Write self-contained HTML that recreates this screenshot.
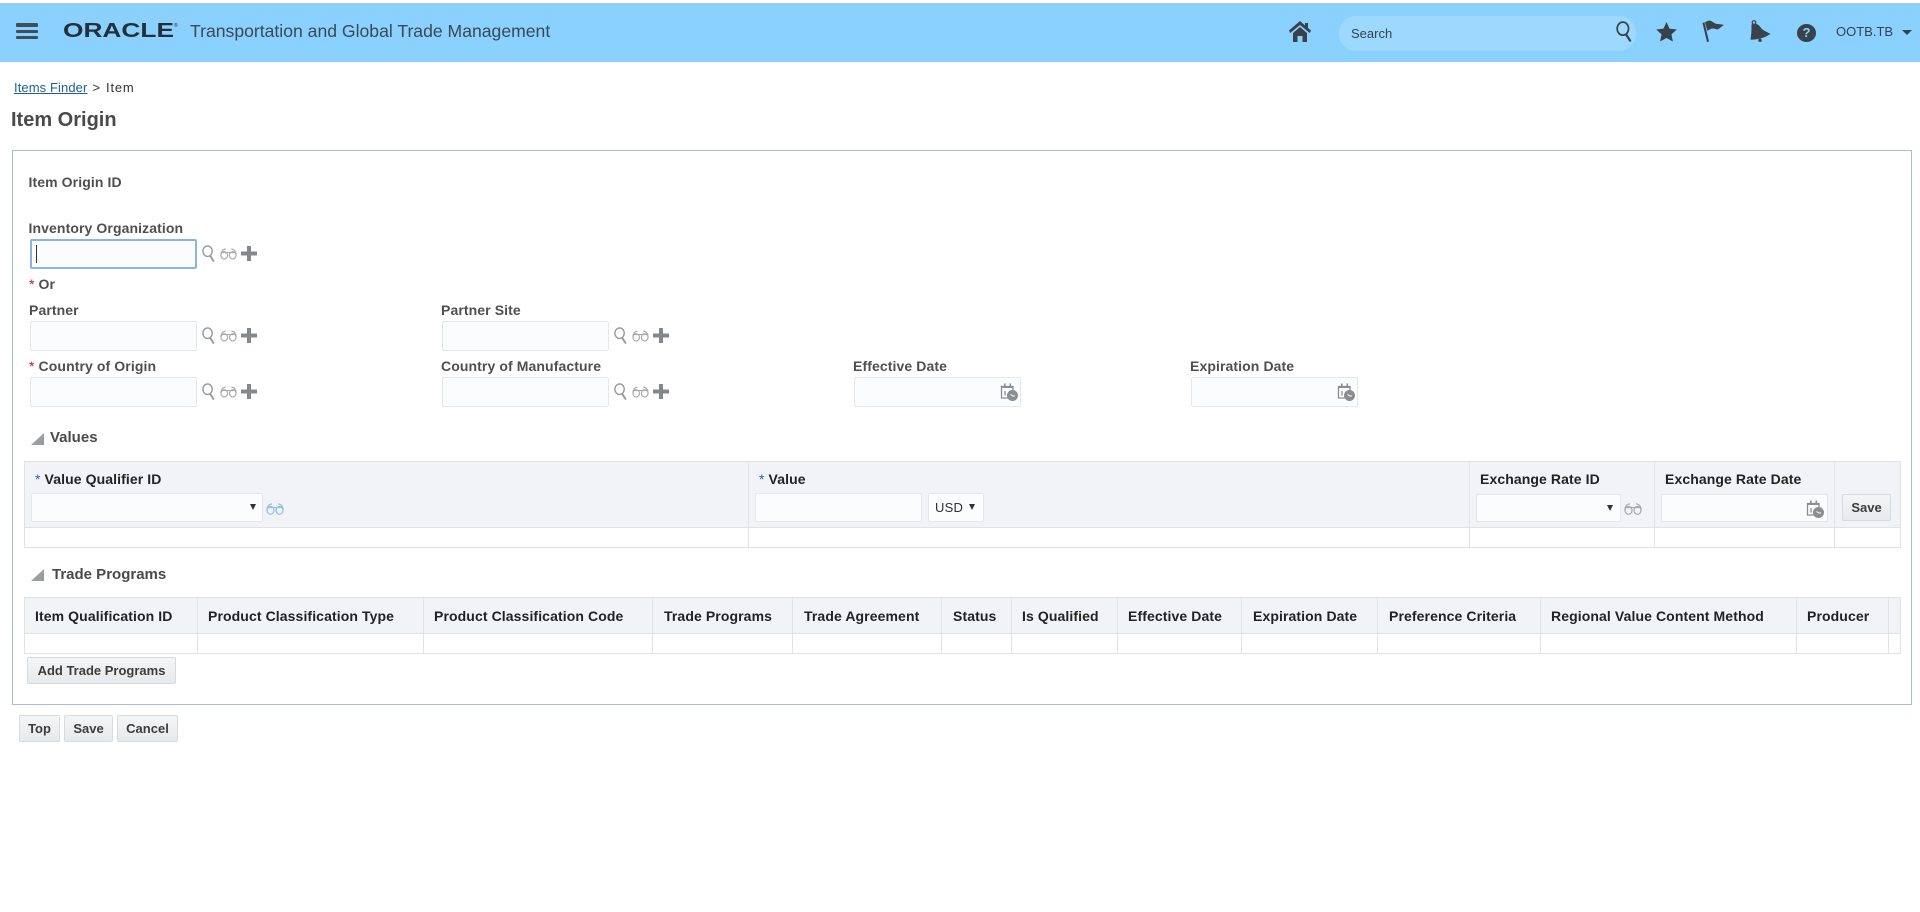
<!DOCTYPE html>
<html><head><meta charset="utf-8"><title>Item Origin</title>
<style>
html,body{margin:0;padding:0;background:#fff;width:1920px;height:912px;overflow:hidden}
body{position:relative;font-family:"Liberation Sans",sans-serif;color:#333}
div,span.a,svg{position:absolute}
.t{white-space:nowrap;line-height:20px;height:20px}
.l{font-size:14px;font-weight:bold;color:#4f4f4f;letter-spacing:.1px}
.h{font-size:14px;font-weight:bold;color:#222;letter-spacing:.1px}
.i{background:#fbfcfd;border:1px solid #e4e8eb;border-radius:2px;box-sizing:border-box}
.b{background:linear-gradient(#f3f5f6,#e7eaec);border:1px solid #d6dbdf;border-radius:2px;box-sizing:border-box;font-size:13px;font-weight:bold;color:#3c3c3c;text-align:center;line-height:25px;white-space:nowrap}
.v{background:#e0e4e8;width:1px}
.ln{background:#dfe3e7;height:1px}
.r{color:#c8102e;font-weight:normal}.u{color:#2a5fc0;font-weight:normal}
</style></head><body>
<svg width="0" height="0" style="position:absolute"><defs>
<symbol id="s" viewBox="0 0 14 18"><ellipse cx="6" cy="6.500" rx="5" ry="5.700" fill="none" stroke="currentColor" stroke-width="1.500"/><path d="M9 11.800L12.300 17" stroke="currentColor" stroke-width="2" stroke-linecap="round"/></symbol>
<symbol id="g" viewBox="0 0 18 12"><ellipse cx="4.500" cy="7.400" rx="3.500" ry="3.900" fill="none" stroke="currentColor" stroke-width="1.200"/><ellipse cx="13.500" cy="7.400" rx="3.500" ry="3.900" fill="none" stroke="currentColor" stroke-width="1.200"/><path d="M1 4.500H17" stroke="currentColor" stroke-width="1.100"/><path d="M.9 7C1 3.500 3 1 6 .8M17.100 7C17 3.500 15 1 12 .8" fill="none" stroke="currentColor" stroke-width="1.200"/></symbol>
<symbol id="p" viewBox="0 0 16 15"><path d="M6 0h4v5.500h6v4h-6V15H6V9.500H0v-4h6z" fill="currentColor"/></symbol>
<symbol id="c" viewBox="0 0 18 18"><path d="M3 3.500h10v6M3 3.500H1.500V15H8" fill="none" stroke="currentColor" stroke-width="1.300"/><path d="M1.500 3h12v2h-12zM4 .5h1.600V3H4zM9.500.5h1.600V3H9.500z" fill="currentColor"/><path d="M5 8v4.500" stroke="currentColor" stroke-width="1.300"/><circle cx="12.500" cy="12.500" r="5.500" fill="currentColor"/><path d="M10.500 11.500l2.500 1.500h2" stroke="#fff" stroke-width="1" fill="none"/></symbol>
</defs></svg>

<!-- header -->
<div style="left:0;top:3px;width:1920px;height:1px;background:#b9c6cf"></div>
<div style="left:0;top:4px;width:1920px;height:58px;background:#8bd1ff"></div>
<div style="left:16px;top:23px;width:22px;height:3.500px;background:#3f4f5a;border-radius:1px"></div>
<div style="left:16px;top:29.500px;width:22px;height:3.500px;background:#3f4f5a;border-radius:1px"></div>
<div style="left:16px;top:35.500px;width:22px;height:3.500px;background:#3f4f5a;border-radius:1px"></div>
<svg style="left:63px;top:17px;overflow:visible" width="116" height="26"><text x="0" y="20" font-family="Liberation Sans" font-weight="bold" font-size="20" textLength="111" lengthAdjust="spacingAndGlyphs" fill="#22303a">ORACLE</text><text x="111" y="10" font-family="Liberation Sans" font-size="5" fill="#22303a">®</text></svg>
<div class="t" style="left:190px;top:21px;font-size:17.600px;color:#3a4955;width:370px;">Transportation and Global Trade Management</div>
<svg style="left:1289px;top:21px" width="22" height="21" viewBox="0 0 22 21"><path d="M11 0L0 9.500l1.200 2.500L11 4l9.800 8L22 9.500l-3-2.500V2h-3v2.500z" fill="#37424a"/><path d="M4 12L11 6l7 6v9H13.500v-6h-5v6H4z" fill="#37424a"/></svg>
<div style="left:1339px;top:16px;width:297px;height:35px;border-radius:17px;background:#9dd9ff"></div>
<div class="t" style="left:1351px;top:24px;font-size:13px;color:#37424a">Search</div>
<svg style="left:1616px;top:21px;color:#37424a" width="16" height="21"><use href="#s" width="16" height="21"/></svg>
<svg style="left:1656px;top:22px" width="21" height="20" viewBox="0 0 20 19"><path d="M10 0l2.900 6.300 6.900.8-5.100 4.700 1.400 6.800L10 15.200 3.900 18.600l1.400-6.800L.2 7.100l6.900-.8z" fill="#37424a"/></svg>
<svg style="left:1702px;top:20px" width="22" height="22" viewBox="0 0 22 22"><path d="M.5 3l2-.8L7 21.500l-2 .5z" fill="#37424a"/><path d="M3 2.500C5 .5 8 0 10 1.500c2 1.500 4 2.500 6 2.500 2 0 4 .5 6 1-2 1-4 3-5.500 4-2 1-3.500-.5-5.500-.5-2 0-4 1-5.500 2.500z" fill="#37424a"/></svg>
<svg style="left:1750px;top:20px" width="21" height="22" viewBox="0 0 21 22"><circle cx="4" cy="2.500" r="1.800" fill="none" stroke="#37424a" stroke-width="1.200"/><path d="M1.500 4.500C4 3 7 3.500 9 5.500c1.500 1.500 2.500 3.500 4.500 4.800l7 3.700-5.500 3c-4 1.700-9 2.500-13.800 2.800L.5 19C1.500 15 1.500 8 1.500 4.500z" fill="#37424a"/><circle cx="10" cy="20.300" r="1.700" fill="#37424a"/></svg>
<div style="left:1797px;top:24px;width:19px;height:18px;border-radius:50%;background:#37424a;color:#8bd1ff;font-size:13px;font-weight:bold;text-align:center;line-height:18px">?</div>
<div class="t" style="left:1836px;top:22px;font-size:13px;color:#37424a">OOTB.TB</div>
<svg style="left:1902px;top:30px" width="10" height="5"><path d="M0 0h10L5 5z" fill="#37424a"/></svg>

<!-- breadcrumb -->
<div class="t" style="left:14px;top:78px;font-size:13px;color:#333"><span style="color:#1e5f95;text-decoration:underline;letter-spacing:.1px">Items Finder</span><span style="margin-left:5px">&gt;</span><span style="margin-left:6px;letter-spacing:.8px">Item</span></div>
<div class="t" style="left:11px;top:110px;font-size:20px;font-weight:bold;color:#4a4a4a">Item Origin</div>

<!-- panel -->
<div style="left:12px;top:150px;width:1900px;height:555px;box-sizing:border-box;border:1px solid #a9bec9"></div>
<div class="t l" style="left:28.500px;top:172px">Item Origin ID</div>
<div class="t l" style="left:28.500px;top:218px">Inventory Organization</div>
<div class="i" style="left:30px;top:239px;width:167px;height:30px;border:2px solid #8db2e4"></div>
<div style="left:36px;top:245px;width:1px;height:18px;background:#333"></div>
<div class="t l" style="left:29px;top:274px"><span class="r">*</span> Or</div>

<div class="t l" style="left:29px;top:300px">Partner</div>
<div class="i" style="left:30px;top:321px;width:167px;height:30px"></div>
<div class="t l" style="left:441px;top:300px">Partner Site</div>
<div class="i" style="left:442px;top:321px;width:167px;height:30px"></div>
<div class="t l" style="left:29px;top:356px"><span class="r">*</span> Country of Origin</div>
<div class="i" style="left:30px;top:377px;width:167px;height:30px"></div>
<div class="t l" style="left:441px;top:356px">Country of Manufacture</div>
<div class="i" style="left:442px;top:377px;width:167px;height:30px"></div>
<div class="t l" style="left:853px;top:356px">Effective Date</div>
<div class="i" style="left:854px;top:377px;width:167px;height:30px"></div>
<div class="t l" style="left:1190px;top:356px">Expiration Date</div>
<div class="i" style="left:1191px;top:377px;width:167px;height:30px"></div>

<!-- lookup icons -->
<svg style="left:202px;top:245px;color:#96989a" width="13" height="17"><use href="#s" width="13" height="17"/></svg>
<svg style="left:220px;top:248px;color:#a6a8aa" width="17" height="12"><use href="#g" width="17" height="12"/></svg>
<svg style="left:241px;top:246px;color:#85888b" width="16" height="15"><use href="#p" width="16" height="15"/></svg>
<svg style="left:202px;top:327px;color:#96989a" width="13" height="17"><use href="#s" width="13" height="17"/></svg>
<svg style="left:220px;top:330px;color:#a6a8aa" width="17" height="12"><use href="#g" width="17" height="12"/></svg>
<svg style="left:241px;top:328px;color:#85888b" width="16" height="15"><use href="#p" width="16" height="15"/></svg>
<svg style="left:614px;top:327px;color:#96989a" width="13" height="17"><use href="#s" width="13" height="17"/></svg>
<svg style="left:632px;top:330px;color:#a6a8aa" width="17" height="12"><use href="#g" width="17" height="12"/></svg>
<svg style="left:653px;top:328px;color:#85888b" width="16" height="15"><use href="#p" width="16" height="15"/></svg>
<svg style="left:202px;top:383px;color:#96989a" width="13" height="17"><use href="#s" width="13" height="17"/></svg>
<svg style="left:220px;top:386px;color:#a6a8aa" width="17" height="12"><use href="#g" width="17" height="12"/></svg>
<svg style="left:241px;top:384px;color:#85888b" width="16" height="15"><use href="#p" width="16" height="15"/></svg>
<svg style="left:614px;top:383px;color:#96989a" width="13" height="17"><use href="#s" width="13" height="17"/></svg>
<svg style="left:632px;top:386px;color:#a6a8aa" width="17" height="12"><use href="#g" width="17" height="12"/></svg>
<svg style="left:653px;top:384px;color:#85888b" width="16" height="15"><use href="#p" width="16" height="15"/></svg>
<svg style="left:1000px;top:383px;color:#8a8e92" width="18" height="18"><use href="#c" width="18" height="18"/></svg>
<svg style="left:1337px;top:383px;color:#8a8e92" width="18" height="18"><use href="#c" width="18" height="18"/></svg>

<!-- Values -->
<svg style="left:31px;top:433px" width="13" height="12"><path d="M13 0V12H0z" fill="#9a9ea2"/></svg>
<div class="t" style="left:50px;top:428px;font-size:15px;font-weight:bold;color:#4a4a4a">Values</div>
<div style="left:24px;top:461px;width:1876px;height:67px;background:#f1f3f6;border-top:1px solid #dfe3e7;box-sizing:border-box"></div>
<div class="ln" style="left:24px;top:527px;width:1876px"></div>
<div class="ln" style="left:24px;top:547px;width:1876px"></div>
<div class="v" style="left:24px;top:461px;height:87px"></div>
<div class="v" style="left:748px;top:461px;height:87px"></div>
<div class="v" style="left:1469px;top:461px;height:87px"></div>
<div class="v" style="left:1654px;top:461px;height:87px"></div>
<div class="v" style="left:1834px;top:461px;height:87px"></div>
<div class="v" style="left:1900px;top:461px;height:87px"></div>
<div class="t h" style="left:35px;top:469px"><span class="u">*</span> Value Qualifier ID</div>
<div class="i" style="left:31px;top:493px;width:232px;height:29px"></div>
<svg style="left:250px;top:504px" width="6" height="6"><path d="M0 0h6L3 6z" fill="#333"/></svg>
<svg style="left:266px;top:503px;color:#8fbfe6" width="18" height="12"><use href="#g" width="18" height="12"/></svg>
<div class="t h" style="left:759px;top:469px"><span class="u">*</span> Value</div>
<div class="i" style="left:755px;top:493px;width:167px;height:29px"></div>
<div class="i" style="left:928px;top:493px;width:56px;height:29px"></div>
<div class="t" style="left:935px;top:498px;font-size:13px;color:#333;letter-spacing:.2px">USD</div>
<svg style="left:969px;top:504px" width="6" height="6"><path d="M0 0h6L3 6z" fill="#333"/></svg>
<div class="t h" style="left:1480px;top:469px">Exchange Rate ID</div>
<div class="i" style="left:1476px;top:494px;width:145px;height:28px"></div>
<svg style="left:1607px;top:505px" width="6" height="6"><path d="M0 0h6L3 6z" fill="#333"/></svg>
<svg style="left:1624px;top:503px;color:#a6a8aa" width="18" height="12"><use href="#g" width="18" height="12"/></svg>
<div class="t h" style="left:1665px;top:469px">Exchange Rate Date</div>
<div class="i" style="left:1661px;top:494px;width:167px;height:28px"></div>
<svg style="left:1806px;top:500px;color:#8a8e92" width="18" height="18"><use href="#c" width="18" height="18"/></svg>
<div class="b" style="left:1842px;top:494px;width:49px;height:27px">Save</div>

<!-- Trade Programs -->
<svg style="left:31px;top:569px" width="13" height="12"><path d="M13 0V12H0z" fill="#9a9ea2"/></svg>
<div class="t" style="left:52px;top:565px;font-size:15px;font-weight:bold;color:#4a4a4a">Trade Programs</div>
<div style="left:24px;top:597px;width:1876px;height:37px;background:#f1f3f6;border-top:1px solid #dfe3e7;box-sizing:border-box"></div>
<div class="ln" style="left:24px;top:633px;width:1876px"></div>
<div class="ln" style="left:24px;top:653px;width:1876px"></div>
<div class="v" style="left:24px;top:597px;height:57px"></div>
<div class="v" style="left:197px;top:597px;height:57px"></div>
<div class="v" style="left:423px;top:597px;height:57px"></div>
<div class="v" style="left:652px;top:597px;height:57px"></div>
<div class="v" style="left:792px;top:597px;height:57px"></div>
<div class="v" style="left:941px;top:597px;height:57px"></div>
<div class="v" style="left:1011px;top:597px;height:57px"></div>
<div class="v" style="left:1117px;top:597px;height:57px"></div>
<div class="v" style="left:1241px;top:597px;height:57px"></div>
<div class="v" style="left:1377px;top:597px;height:57px"></div>
<div class="v" style="left:1540px;top:597px;height:57px"></div>
<div class="v" style="left:1796px;top:597px;height:57px"></div>
<div class="v" style="left:1888px;top:597px;height:57px"></div>
<div class="v" style="left:1900px;top:597px;height:57px"></div>
<div class="t h" style="left:35px;top:606px">Item Qualification ID</div>
<div class="t h" style="left:208px;top:606px">Product Classification Type</div>
<div class="t h" style="left:434px;top:606px">Product Classification Code</div>
<div class="t h" style="left:664px;top:606px">Trade Programs</div>
<div class="t h" style="left:804px;top:606px">Trade Agreement</div>
<div class="t h" style="left:953px;top:606px">Status</div>
<div class="t h" style="left:1022px;top:606px">Is Qualified</div>
<div class="t h" style="left:1128px;top:606px">Effective Date</div>
<div class="t h" style="left:1253px;top:606px">Expiration Date</div>
<div class="t h" style="left:1389px;top:606px">Preference Criteria</div>
<div class="t h" style="left:1551px;top:606px">Regional Value Content Method</div>
<div class="t h" style="left:1807px;top:606px">Producer</div>

<div class="b" style="left:27px;top:657px;width:149px;height:27px">Add Trade Programs</div>
<div class="b" style="left:19px;top:715px;width:41px;height:27px">Top</div>
<div class="b" style="left:64px;top:715px;width:49px;height:27px">Save</div>
<div class="b" style="left:117px;top:715px;width:61px;height:27px">Cancel</div>
</body></html>
